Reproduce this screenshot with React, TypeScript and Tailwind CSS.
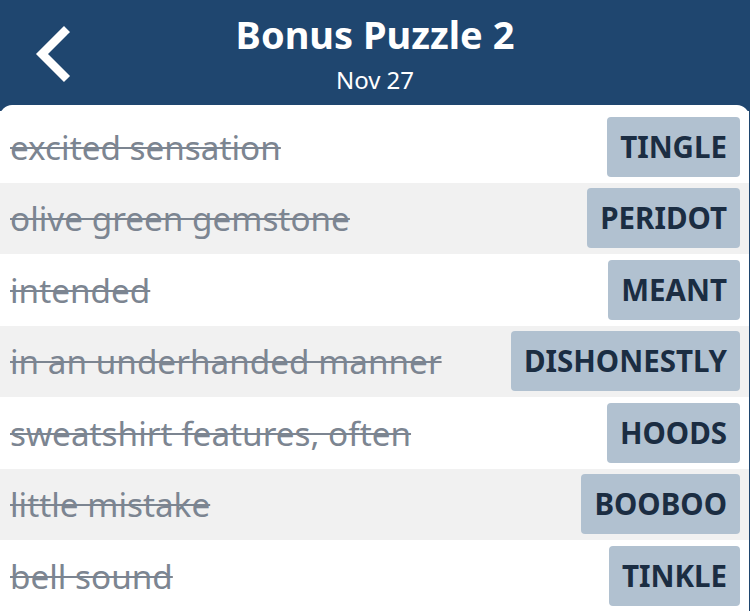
type Clue = { clue: string; answer: string };

const CLUES: Clue[] = [
  { clue: 'excited sensation', answer: 'TINGLE' },
  { clue: 'olive green gemstone', answer: 'PERIDOT' },
  { clue: 'intended', answer: 'MEANT' },
  { clue: 'in an underhanded manner', answer: 'DISHONESTLY' },
  { clue: 'sweatshirt features, often', answer: 'HOODS' },
  { clue: 'little mistake', answer: 'BOOBOO' },
  { clue: 'bell sound', answer: 'TINKLE' },
];

export default function App() {
  return (
    <div className="h-[611px] w-[750px] overflow-hidden bg-[#1f466f] font-['Noto_Sans',sans-serif]">
      <header className="relative flex h-[105px] flex-col items-center pt-[11px] text-white">
        <button className="absolute left-[30px] top-[24px] text-white">
          <svg width="44" height="60" viewBox="0 0 44 60" fill="none">
            <polyline points="34,8 12,30 34,52" stroke="white" strokeWidth="8.5" strokeLinecap="square" strokeLinejoin="miter" />
          </svg>
        </button>
        <h1 className="text-[38px] font-bold leading-[46px]">Bonus Puzzle 2</h1>
        <p className="mt-[8px] text-[24px] leading-[30px]">Nov 27</p>
      </header>

      <div className="mr-[1px] rounded-t-[12px] bg-white pt-[6px]">
        {CLUES.map((item, idx) => (
          <div
            key={item.clue}
            className={`flex h-[71.5px] items-center justify-between pl-[10px] pr-[9px] ${idx % 2 === 1 ? 'bg-[#f1f1f1]' : 'bg-white'}`}
          >
            <span className="text-[33.3px] leading-[40px] text-[#7c8591] line-through decoration-[2px]">{item.clue}</span>
            <span className="flex h-[60px] items-center rounded-[4px] bg-[#b1c1d0] px-[13px] text-[29.5px] font-bold text-[#1b2d42]">
              {item.answer}
            </span>
          </div>
        ))}
      </div>
    </div>
  );
}
